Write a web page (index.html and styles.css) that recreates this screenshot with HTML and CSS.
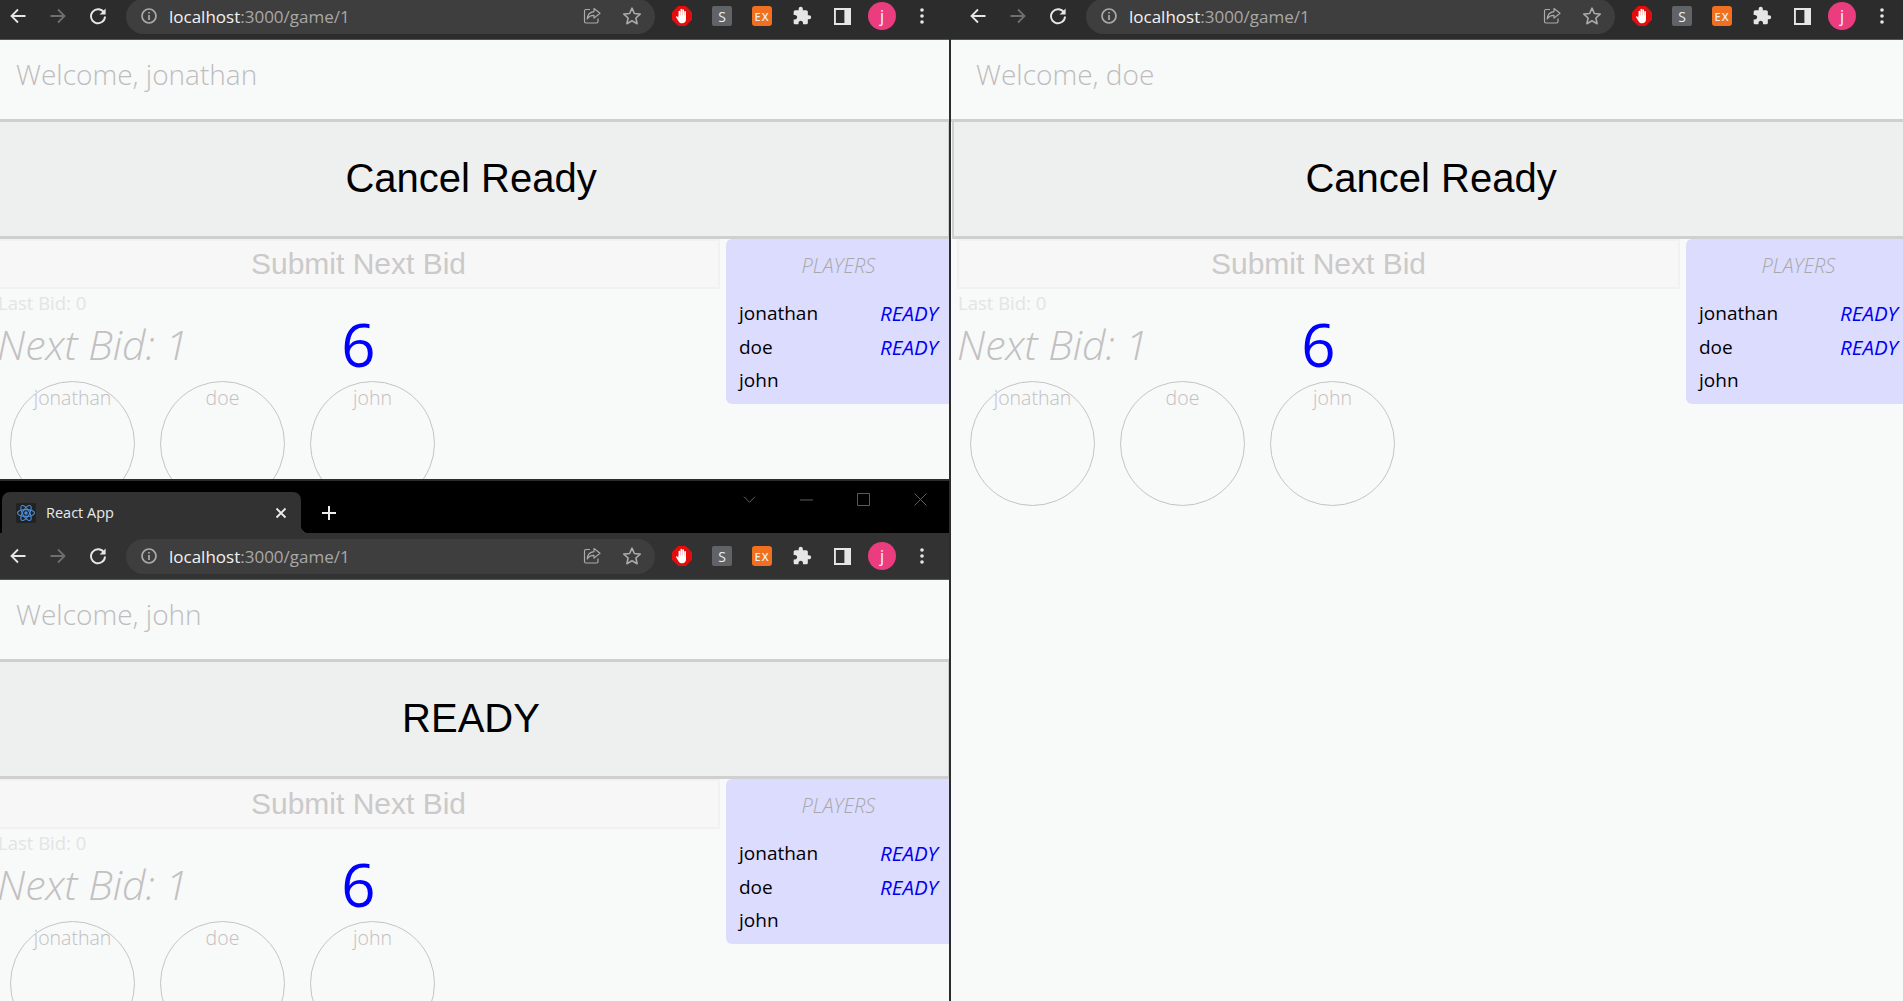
FILE: index.html
```html
<!DOCTYPE html>
<html>
<head>
  <meta charset="UTF-8">
  <title>Game 1 windows</title>
  <link rel="stylesheet" href="styles.css">
</head>
<body>
  <svg class="sprites" width="0" height="0">
    <symbol id="i-back" viewBox="0 0 20 20"><path d="M17.5 10H3.5M10 3.5L3.5 10l6.5 6.5" fill="none" stroke="currentColor" stroke-width="1.8"/></symbol>
    <symbol id="i-forward" viewBox="0 0 20 20"><path d="M2.5 10h14M10 3.5l6.5 6.5-6.5 6.5" fill="none" stroke="currentColor" stroke-width="1.8"/></symbol>
    <symbol id="i-reload" viewBox="0 0 20 20"><path d="M16.2 7a7 7 0 1 0 .8 3.4" fill="none" stroke="currentColor" stroke-width="1.9"/><path d="M17.6 2.4v6h-6z" fill="currentColor"/></symbol>
    <symbol id="i-info" viewBox="0 0 20 20"><circle cx="10" cy="10" r="7" fill="none" stroke="currentColor" stroke-width="1.7"/><path d="M10 9v5M10 6v1.6" stroke="currentColor" stroke-width="1.7"/></symbol>
    <symbol id="i-share" viewBox="0 0 20 20"><path d="M8 3.5H4a1.500 1.500 0 0 0-1.500 1.500v10.500a1.500 1.500 0 0 0 1.500 1.500h10.500a1.500 1.500 0 0 0 1.500-1.500v-3" fill="none" stroke="currentColor" stroke-width="1.2"/><path d="M12 2.500l6 4.800-6 4.800V9.300c-3.500 0-5.500 1.200-6.800 3.700.3-4.200 2.800-7 6.800-7.400z" fill="none" stroke="currentColor" stroke-width="1.200" stroke-linejoin="round"/></symbol>
    <symbol id="i-star" viewBox="0 0 20 20"><path d="M10 2.200l2.400 5.300 5.800.6-4.300 3.900 1.200 5.700-5.100-2.900-5.100 2.900 1.200-5.700-4.300-3.900 5.800-.6z" fill="none" stroke="currentColor" stroke-width="1.600" stroke-linejoin="round"/></symbol>
    <symbol id="i-abp" viewBox="0 0 20 20">
      <path d="M6.200 0h7.600L20 6.200v7.600L13.800 20H6.200L0 13.800V6.200z" fill="#e40d0d"/>
      <path d="M7.400 11V5.500M9.300 10V3.600M11.200 10V4M13.100 11V5.800" stroke="#fff" stroke-width="1.700" stroke-linecap="round"/>
      <path d="M6.500 9.500h7.500v4c0 2.400-1.600 3.800-3.800 3.800-2 0-3-.9-3.800-2.300l-2.200-3.600c-.5-.9.500-1.500 1.200-.8l1.100 1.100z" fill="#fff"/>
    </symbol>
    <symbol id="i-puzzle" viewBox="0 0 24 24"><path d="M20.500 11H19V7c0-1.100-.9-2-2-2h-4V3.500C13 2.120 11.880 1 10.500 1S8 2.120 8 3.500V5H4c-1.100 0-1.990.9-1.990 2v3.800H3.500c1.490 0 2.700 1.210 2.700 2.700s-1.210 2.700-2.700 2.700H2V20c0 1.100.9 2 2 2h3.800v-1.500c0-1.490 1.210-2.700 2.700-2.700 1.490 0 2.700 1.210 2.700 2.700V22H17c1.100 0 2-.9 2-2v-4h1.500c1.380 0 2.500-1.120 2.500-2.500S21.880 11 20.500 11z" fill="currentColor"/></symbol>
    <symbol id="i-panel" viewBox="0 0 18 18"><path d="M0 0h18v18H0zM2 2v14h9V2z" fill="currentColor" fill-rule="evenodd"/></symbol>
    <symbol id="i-dots" viewBox="0 0 20 20"><circle cx="10" cy="4" r="1.800" fill="currentColor"/><circle cx="10" cy="10" r="1.800" fill="currentColor"/><circle cx="10" cy="16" r="1.800" fill="currentColor"/></symbol>
  </svg>

  <div class="desktop">
    <div class="left-side">
      <div class="pane pane-top">
        <div class="window window-cropped">
          <div class="toolbar">
            <span class="nav"><svg class="ic20 light"><use href="#i-back"/></svg></span>
            <span class="nav"><svg class="ic20 dim"><use href="#i-forward"/></svg></span>
            <span class="nav"><svg class="ic20 light"><use href="#i-reload"/></svg></span>
            <div class="omnibox">
              <svg class="ic20 grey"><use href="#i-info"/></svg>
              <span class="url"><b>localhost</b>:3000/game/1</span>
              <span class="nav"><svg class="ic20 grey"><use href="#i-share"/></svg></span>
              <span class="nav"><svg class="ic20 grey"><use href="#i-star"/></svg></span>
            </div>
            <div class="extensions">
              <span class="nav"><svg class="ic20"><use href="#i-abp"/></svg></span>
              <span class="nav"><span class="ext ext-s">S</span></span>
              <span class="nav"><span class="ext ext-ex">EX</span></span>
              <span class="nav"><svg class="ic20 light"><use href="#i-puzzle"/></svg></span>
              <span class="nav"><svg class="ic18 light"><use href="#i-panel"/></svg></span>
              <span class="nav"><span class="avatar">j</span></span>
              <span class="nav"><svg class="ic20 light"><use href="#i-dots"/></svg></span>
            </div>
          </div>
          <div class="page">
            <h1 class="welcome">Welcome, jonathan</h1>
            <button class="ready-btn">Cancel Ready</button>
            <div class="game">
              <div class="game-main">
                <button class="bid-btn">Submit Next Bid</button>
                <div class="last-bid">Last Bid: 0</div>
                <div class="bid-row">
                  <span class="next-bid">Next Bid: 1</span>
                  <span class="count">6</span>
                </div>
                <div class="seats">
                  <div class="seat">jonathan</div>
                  <div class="seat">doe</div>
                  <div class="seat">john</div>
                </div>
              </div>
              <div class="players">
                <div class="players-title">PLAYERS</div>
                <div class="player"><span>jonathan</span><em>READY</em></div>
                <div class="player"><span>doe</span><em>READY</em></div>
                <div class="player"><span>john</span></div>
              </div>
            </div>
          </div>
        </div>
      </div>

      <div class="pane pane-bottom">
        <div class="window">
          <div class="titlebar">
            <div class="tab">
              <svg class="favicon" viewBox="0 0 20 20">
                <rect width="20" height="20" rx="2" fill="#222"/>
                <g fill="none" stroke="#4b8fdc" stroke-width="1.100">
                  <ellipse cx="10" cy="10" rx="8.500" ry="3.400"/>
                  <ellipse cx="10" cy="10" rx="8.500" ry="3.400" transform="rotate(60 10 10)"/>
                  <ellipse cx="10" cy="10" rx="8.500" ry="3.400" transform="rotate(120 10 10)"/>
                </g>
                <circle cx="10" cy="10" r="1.700" fill="#4b8fdc"/>
              </svg>
              <span class="tab-title">React App</span>
              <svg class="tab-close" viewBox="0 0 12 12"><path d="M1.500 1.500l9 9M10.500 1.500l-9 9" stroke="#eee" stroke-width="1.800"/></svg>
            </div>
            <svg class="tab-new" viewBox="0 0 16 16"><path d="M8 1v14M1 8h14" stroke="#eee" stroke-width="2"/></svg>
            <div class="caption">
              <svg viewBox="0 0 14 14"><path d="M1 4l6 6 6-6" fill="none" stroke="#666"/></svg>
              <svg viewBox="0 0 14 14"><path d="M0 7.500h14" stroke="#666"/></svg>
              <svg viewBox="0 0 14 14"><path d="M.5.5h13v13H.5z" fill="none" stroke="#666"/></svg>
              <svg viewBox="0 0 14 14"><path d="M.5.5l13 13M13.500.5l-13 13" stroke="#666"/></svg>
            </div>
          </div>
          <div class="toolbar">
            <span class="nav"><svg class="ic20 light"><use href="#i-back"/></svg></span>
            <span class="nav"><svg class="ic20 dim"><use href="#i-forward"/></svg></span>
            <span class="nav"><svg class="ic20 light"><use href="#i-reload"/></svg></span>
            <div class="omnibox">
              <svg class="ic20 grey"><use href="#i-info"/></svg>
              <span class="url"><b>localhost</b>:3000/game/1</span>
              <span class="nav"><svg class="ic20 grey"><use href="#i-share"/></svg></span>
              <span class="nav"><svg class="ic20 grey"><use href="#i-star"/></svg></span>
            </div>
            <div class="extensions">
              <span class="nav"><svg class="ic20"><use href="#i-abp"/></svg></span>
              <span class="nav"><span class="ext ext-s">S</span></span>
              <span class="nav"><span class="ext ext-ex">EX</span></span>
              <span class="nav"><svg class="ic20 light"><use href="#i-puzzle"/></svg></span>
              <span class="nav"><svg class="ic18 light"><use href="#i-panel"/></svg></span>
              <span class="nav"><span class="avatar">j</span></span>
              <span class="nav"><svg class="ic20 light"><use href="#i-dots"/></svg></span>
            </div>
          </div>
          <div class="page">
            <h1 class="welcome">Welcome, john</h1>
            <button class="ready-btn">READY</button>
            <div class="game">
              <div class="game-main">
                <button class="bid-btn">Submit Next Bid</button>
                <div class="last-bid">Last Bid: 0</div>
                <div class="bid-row">
                  <span class="next-bid">Next Bid: 1</span>
                  <span class="count">6</span>
                </div>
                <div class="seats">
                  <div class="seat">jonathan</div>
                  <div class="seat">doe</div>
                  <div class="seat">john</div>
                </div>
              </div>
              <div class="players">
                <div class="players-title">PLAYERS</div>
                <div class="player"><span>jonathan</span><em>READY</em></div>
                <div class="player"><span>doe</span><em>READY</em></div>
                <div class="player"><span>john</span></div>
              </div>
            </div>
          </div>
        </div>
      </div>
    </div>

    <div class="pane pane-right">
      <div class="window window-top">
        <div class="toolbar">
          <span class="nav"><svg class="ic20 light"><use href="#i-back"/></svg></span>
          <span class="nav"><svg class="ic20 dim"><use href="#i-forward"/></svg></span>
          <span class="nav"><svg class="ic20 light"><use href="#i-reload"/></svg></span>
          <div class="omnibox">
            <svg class="ic20 grey"><use href="#i-info"/></svg>
            <span class="url"><b>localhost</b>:3000/game/1</span>
            <span class="nav"><svg class="ic20 grey"><use href="#i-share"/></svg></span>
            <span class="nav"><svg class="ic20 grey"><use href="#i-star"/></svg></span>
          </div>
          <div class="extensions">
            <span class="nav"><svg class="ic20"><use href="#i-abp"/></svg></span>
            <span class="nav"><span class="ext ext-s">S</span></span>
            <span class="nav"><span class="ext ext-ex">EX</span></span>
            <span class="nav"><svg class="ic20 light"><use href="#i-puzzle"/></svg></span>
            <span class="nav"><svg class="ic18 light"><use href="#i-panel"/></svg></span>
            <span class="nav"><span class="avatar">j</span></span>
            <span class="nav"><svg class="ic20 light"><use href="#i-dots"/></svg></span>
          </div>
        </div>
        <div class="page">
          <h1 class="welcome">Welcome, doe</h1>
          <button class="ready-btn">Cancel Ready</button>
          <div class="game">
            <div class="game-main">
              <button class="bid-btn">Submit Next Bid</button>
              <div class="last-bid">Last Bid: 0</div>
              <div class="bid-row">
                <span class="next-bid">Next Bid: 1</span>
                <span class="count">6</span>
              </div>
              <div class="seats">
                <div class="seat">jonathan</div>
                <div class="seat">doe</div>
                <div class="seat">john</div>
              </div>
            </div>
            <div class="players">
              <div class="players-title">PLAYERS</div>
              <div class="player"><span>jonathan</span><em>READY</em></div>
              <div class="player"><span>doe</span><em>READY</em></div>
              <div class="player"><span>john</span></div>
            </div>
          </div>
        </div>
      </div>
    </div>
  </div>
</body>
</html>
```

FILE: styles.css
```css
* { box-sizing: border-box; }
html, body { margin: 0; height: 100%; overflow: hidden; }
body { background: #2c2c2c; font-family: "Open Sans", sans-serif; }
.sprites { display: block; height: 0; }

.desktop { display: flex; height: 1001px; gap: 2px; }
.left-side { width: 949px; display: flex; flex-direction: column; }
.pane { overflow: hidden; }
.pane-top { height: 479px; flex: none; }
.pane-bottom { margin-top: 2px; flex: 1; background: #000; }
.pane-right { width: 952px; }

/* the shots are cut off, every window is 960 wide */
.window { width: 960px; height: 100%; display: flex; flex-direction: column; }
.window-cropped { margin: -7px 0 0 -9px; height: calc(100% + 7px); }
.pane-bottom .window { margin-left: -9px; }
.window-top { margin-top: -7px; height: calc(100% + 7px); }

.titlebar { height: 52px; flex: none; background: #000; display: flex; align-items: flex-end; position: relative; }
.tab { width: 299px; height: 41px; margin-left: 11px; background: #323232; border-radius: 8px 8px 0 0; display: flex; align-items: center; padding: 0 14px 0 14px; position: relative; }
.tab::after { content: ""; position: absolute; right: -8px; bottom: 0; width: 8px; height: 8px; background: radial-gradient(circle at 100% 0, #000 8px, #323232 8.500px); }
.favicon { width: 20px; height: 20px; flex: none; }
.tab-title { color: #e8eaed; font-size: 14.500px; margin-left: 10px; flex: 1; }
.tab-close { width: 12px; height: 12px; }
.tab-new { width: 16px; height: 16px; margin: 0 0 12px 20px; }
.caption { position: absolute; top: 12px; left: 752px; display: flex; gap: 44px; }
.caption svg { width: 13px; height: 13px; }

.toolbar { height: 47px; flex: none; background: #323232; border-bottom: 1px solid #555; display: flex; align-items: center; padding-left: 15px; }
.window-cropped .toolbar, .window-top .toolbar { background: #2c2c2c; }
.nav { width: 40px; height: 34px; flex: none; display: flex; align-items: center; justify-content: center; }
.ic20 { width: 20px; height: 20px; }
.ic18 { width: 17px; height: 17px; }
.light { color: #e6e6e6; }
.dim { color: #6f6f6f; }
.grey { color: #aaa; }
.toolbar > .nav { width: 40px; margin-left: -8px; margin-right: 8px; }

.omnibox { width: 529px; height: 35px; background: #3e3e3e; border-radius: 18px; display: flex; align-items: center; padding: 0 3px 0 13px; }
.url { flex: 1; margin-left: 10px; font-size: 17px; color: #a8a8a8; white-space: nowrap; }
.url b { font-weight: 400; color: #f2f2f2; }
.extensions { display: flex; align-items: center; margin-left: 7px; }
.ext { width: 20px; height: 20px; border-radius: 2px; color: #eee; display: flex; align-items: center; justify-content: center; }
.ext-s { background: #616366; font-size: 14px; }
.ext-ex { background: #f0701f; border-radius: 3px; font-size: 11px; font-weight: 600; letter-spacing: 1px; }
.avatar { width: 28px; height: 28px; border-radius: 50%; background: #ea3c7e; color: #fff; font-size: 16px; display: flex; align-items: center; justify-content: center; }

.page { flex: 1; background: #f8f9f9; min-height: 0; }
.welcome { height: 82px; margin: 0; border-bottom: 3px solid #cfcfcf; padding: 15px 0 0 25px; font-size: 28px; line-height: 38px; font-weight: 300; color: #bdbdbd; }
.ready-btn { display: block; width: 958px; height: 117px; margin: 0 1px; background: #eeefef; border: solid #cfcfcf; border-width: 0 2px 3px; padding: 0 0 2px; font-family: "Liberation Sans", Arial, sans-serif; font-size: 40px; color: #000; }

.game { display: flex; padding-left: 6px; }
.game-main { width: 723px; flex: none; }
.bid-btn { display: block; width: 100%; height: 50px; background: #f7f7f7; border: 2px solid #f1f1f1; padding: 0; font-family: "Liberation Sans", Arial, sans-serif; font-size: 30px; color: #cbc9c9; }
.last-bid { height: 27px; line-height: 28px; padding-left: 1px; font-size: 18.500px; color: #e4e4e4; }
.bid-row { height: 65px; display: grid; grid-template-columns: 1fr auto 1fr; align-items: center; padding-bottom: 10px; }
.next-bid { font-size: 41px; font-style: italic; font-weight: 300; color: #c2c0c0; line-height: 50px; }
.count { font-size: 60px; color: #00f; line-height: 50px; }
.seats { display: flex; gap: 25px; padding-left: 13px; }
.seat { width: 125px; height: 125px; flex: none; border: 1px solid #c4c4c4; border-radius: 50%; text-align: center; font-size: 19.500px; font-weight: 300; color: #c2c0c0; padding-top: 2px; }

.players { width: 225px; height: 165px; flex: none; margin-left: 6px; background: #dcdcff; border-radius: 6px 0 0 6px; padding: 14px 13px 0; }
.players-title { text-align: center; font-style: italic; font-weight: 300; font-size: 20px; line-height: 26px; color: #a8a8a8; margin-bottom: 18px; }
.player { display: flex; justify-content: space-between; height: 33.500px; line-height: 33px; font-size: 19px; color: #000; }
.player em { color: #0000f0; font-weight: 400; font-size: 20.500px; line-height: 32px; margin-right: 0; }
```
